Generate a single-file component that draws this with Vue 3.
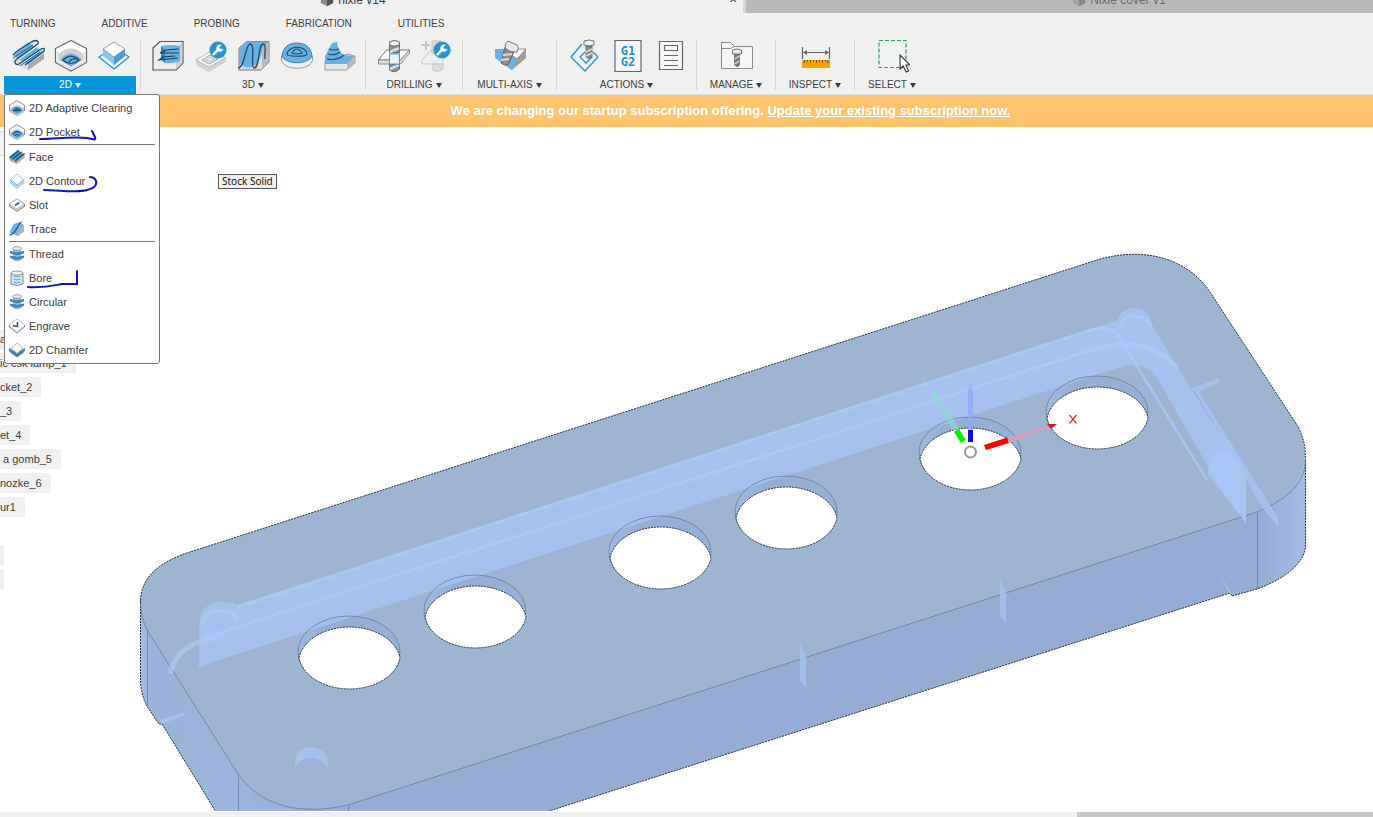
<template>
  <div class="app">
    <svg class="sprite" aria-hidden="true">
      <defs>
        <symbol id="wrench" viewBox="0 0 18 18">
          <circle cx="9" cy="9" r="8.5" fill="#2593d2" />
          <path d="M4.6 13.2 9 8.9" stroke="#fff" stroke-width="2.6" stroke-linecap="round" />
          <path d="M12.6 3.9a3.6 3.6 0 1 0 1.9 3.8l-2 .9-1.8-1.3.3-1.8z" fill="#fff" />
        </symbol>
        <symbol id="cube" viewBox="0 0 16 16">
          <path d="M8 1 15 4.500v7L8 15 1 11.500v-7z" fill="#8c8c8c" />
          <path d="M8 1 15 4.500 8 8 1 4.500z" fill="#c9c9c9" />
          <path d="M8 8v7l7-3.500v-7z" fill="#555" />
        </symbol>
        <symbol id="face" viewBox="0 0 34 34">
          <path d="M1.500 17v6l15.500 8.500V26z" fill="#ddd" />
          <path d="M17 26v5.500L33 20v-6z" fill="#a9a9a9" />
          <path d="M1.500 16 18 4l15 9-16 13z" fill="#69b0e3" />
          <path d="m8 20 17-12M13 23l17-12" stroke="#e8f3fb" stroke-width="1.200" />
          <path d="M2 16C2 14 21 2 24 1.500c4 0 4 3 2 4L6 20c-4 3-1 7 2 5L30 10c4-2 4 1 2 3L14 26" fill="none" stroke="#1c4b6b" stroke-width="1.300" />
          <path d="M2 19 22 6M9 27l20-14" fill="none" stroke="#1c4b6b" stroke-width=".8" />
        </symbol>
        <symbol id="pocket" viewBox="0 0 34 34">
          <path d="M17 1.500 32.500 9.500v14L17 32 1.500 23.500v-14z" fill="#fff" stroke="#666" stroke-width="1.200" />
          <path d="M2.500 11v12L17 31l14.500-8V11L29 14v8l-12 7-12-7v-8z" fill="#e2e2e2" />
          <path d="M5 15q12-11 24 0v6l-12 7-12-7z" fill="#cfcfcf" />
          <path d="M6 21q11-13 22 0l-11 7z" fill="#69b0e3" />
          <path d="M9 21q8-8 16 0-8 7-16 0zM15 24q1-5 8-4" fill="none" stroke="#1c4b6b" stroke-width="1.200" />
        </symbol>
        <symbol id="contour" viewBox="0 0 34 34">
          <path d="M2 18 17 8l15 10-15 12z" fill="#fff" stroke="#258ed0" stroke-width="1.300" />
          <path d="M6 10v7l11 9 11-9v-7z" fill="#8cc6ee" />
          <path d="M17 18v8l11-9v-7z" fill="#3e9edc" />
          <path d="M17 3 28 10l-11 8L6 10z" fill="#fff" stroke="#888" stroke-width=".8" />
        </symbol>
        <symbol id="adaptive" viewBox="0 0 34 34">
          <path d="M2 9 9 2.500h23V24l-7 7H2z" fill="#ededed" stroke="#555" stroke-width="1.200" />
          <path d="M25 9 31.500 3v21L25 30z" fill="#cfcfcf" />
          <path d="M10 7q9-2 19 0v15q-8 3-15 2l-4-4z" fill="#69b0e3" />
          <path d="M10 7v13l4 4V11z" fill="#3b86b9" />
          <path d="M28 10 15 11 9 14l19 0M24 17 12 18l-4 3 19-2" fill="none" stroke="#173e59" stroke-width="1.200" />
        </symbol>
        <symbol id="pocket-edit" viewBox="0 0 34 34">
          <path d="M2 21 15 13l17 6v4L15 33 2 26z" fill="#d1d1d1" />
          <path d="M2 21 15 13l17 6-17 9z" fill="#f4f4f4" stroke="#aaa" stroke-width=".7" />
          <path d="m8 21 8-5 8 4-9 5z" fill="#ddd" stroke="#999" stroke-width=".8" />
          <path d="m12 21 4-2 4 1-4 2z" fill="#fff" stroke="#aaa" stroke-width=".6" />
          <use href="#wrench" x="15" y="2" width="18" height="18" />
        </symbol>
        <symbol id="parallel" viewBox="0 0 34 34">
          <path d="M2 9 10 2.500h22V23l-8 8H2z" fill="#ddd" stroke="#777" />
          <path d="M2 9 10 2.500h22l-6 6q-1 8-5 14-4 6-9 6-7 0-10-6z" fill="#69b0e3" />
          <path d="M25 10 31.500 3.500V23L25 30z" fill="#bbb" />
          <path d="M1 29C8 29 8 6 13 5c6 0 0 23 4 24 6 0 4-24 9-24 4 0 1 11 2 15" fill="none" stroke="#1c4b6b" stroke-width="1.300" />
        </symbol>
        <symbol id="dome" viewBox="0 0 34 34">
          <path d="M1.500 17v4c2 11 29 11 31 0v-4z" fill="#f0f0f0" stroke="#888" stroke-width=".8" />
          <path d="M2 17C3 8 9 4 17 4s14 4 15 13c-4 9-26 9-30 0z" fill="#69b0e3" stroke="#276b9c" stroke-width=".8" />
          <path d="M7 15c1-9 19-9 20 0 0 3-20 3-20 0zM12 14q5-8 10 0-5 2-10 0z" fill="none" stroke="#1c4b6b" stroke-width="1.200" />
        </symbol>
        <symbol id="steep" viewBox="0 0 34 34">
          <path d="M2 22v9h22l8-7v-7l-7-2z" fill="#e7e7e7" stroke="#888" stroke-width=".8" />
          <path d="M24 25v6l8-7v-7z" fill="#bbb" />
          <path d="m9 4 5-1q1 9 7 13l11 1-8 8H2v-8z" fill="#69b0e3" />
          <path d="M6 10q5 2 10 0M5 15q7 2 12-2M4 20q10 2 17-4" fill="none" stroke="#1c4b6b" stroke-width="1.200" />
        </symbol>
        <symbol id="drill" viewBox="0 0 34 34">
          <path d="m1.500 21 8-10h23l-9 10z" fill="#fff" stroke="#777" />
          <path d="M1.500 21v4h22l9-11v-3l-9 10z" fill="#ddd" stroke="#777" stroke-width=".8" />
          <path d="M12.500 3q5-3 10 0v11h-10zM12.500 25h10v5q-5 5-10 1z" fill="#8c8c8c" stroke="#555" stroke-width=".8" />
          <path d="M12.500 3q5-3 10 0v3q-5 2-10 0z" fill="#eee" stroke="#666" stroke-width=".8" />
          <path d="m13 13 9-4M13 30l9-4" stroke="#ddd" stroke-width="2.500" />
          <path d="M12.500 15h10v10h-10z" fill="#e8f2fa" stroke="#3c9bd8" />
        </symbol>
        <symbol id="drill-edit" viewBox="0 0 34 34">
          <path d="M6 2v9M1 6h9" stroke="#c5c5c5" stroke-width="2" />
          <path d="m2 21 9-10h21l-9 10v4H2z" fill="#eee" stroke="#ccc" />
          <path d="M13 25h10v5q-5 4-10 1zM12 2h9v13h-9z" fill="#ddd" stroke="#c5c5c5" />
          <use href="#wrench" x="13" y="2" width="18" height="18" />
        </symbol>
        <symbol id="multi" viewBox="0 0 34 34">
          <path d="M1 10h11l6 21L1 19z" fill="#69b0e3" />
          <path d="m16 20 6-9h10v8L18 31z" fill="#9b9b9b" />
          <path d="M22 10h10l-9 10-6-4z" fill="#fafafa" stroke="#777" stroke-width=".8" />
          <path d="m15 18 8 2-5 11-8-6z" fill="#69b0e3" />
          <path d="m11 8 9 5-6 13q-4 1-7-2z" fill="#8c8c8c" stroke="#555" stroke-width=".8" />
          <path d="m7 21 8-1M9 16l9-1" stroke="#ddd" stroke-width="2" />
          <path d="m14 2 9 4q3 3 0 7-7 1-12-4 0-5 3-7z" fill="#e9e9e9" stroke="#666" stroke-width=".9" />
        </symbol>
        <symbol id="simulate" viewBox="0 0 34 34">
          <path d="M14 5 3 18l14 14 13-14-5-5M17 13l-5 5 6 6 6-6" fill="none" stroke="#258ed0" stroke-width="1.300" />
          <path d="M18 7h6v11q-3 3-6 0z" fill="#888" stroke="#666" stroke-width=".8" />
          <path d="m18 13 6-3M18 17l6-3" stroke="#ddd" stroke-width="1.500" />
          <path d="M16 2q5-2 10 0v4q-5 2-10 0z" fill="#eee" stroke="#666" stroke-width=".9" />
        </symbol>
        <symbol id="post" viewBox="0 0 34 34">
          <path d="M4 1.500h26v31H4z" fill="#f4f7fa" stroke="#666" stroke-width="1.200" />
          <text x="17" y="16" class="gcode">G1</text>
          <text x="17" y="27" class="gcode">G2</text>
        </symbol>
        <symbol id="sheet" viewBox="0 0 34 34">
          <path d="M5.500 2.500h23v28h-23z" fill="#f7f7f7" stroke="#666" stroke-width="1.200" />
          <path d="M10.500 6.500h13v5h-13zM10 16.500h14M10 21.500h14M10 26.500h14" fill="none" stroke="#666" stroke-width="1.200" />
        </symbol>
        <symbol id="library" viewBox="0 0 34 34">
          <path d="M1.500 3.500h9l4 4h18v22h-31z" fill="#f6f6f6" stroke="#888" />
          <path d="M1.500 9.500h9l4-2" fill="none" stroke="#888" />
          <path d="M14.500 14h5v12q-2 3-5 0z" fill="#777" stroke="#666" stroke-width=".8" />
          <path d="m14.500 20 5-3M14.500 25l5-3" stroke="#ccc" stroke-width="1.500" />
          <path d="M12.500 11q4-2 9 0v4h-9z" fill="#e8e8e8" stroke="#666" stroke-width=".9" />
        </symbol>
        <symbol id="measure" viewBox="0 0 34 34">
          <path d="M3.500 8v12M30.500 8v12M4 13.500h26" stroke="#666" stroke-width="1.200" />
          <path d="m4 13.500 4-2.500v5zM30 13.500 26 11v5z" fill="#666" />
          <path d="M3 21h28v8H3z" fill="#f5a300" />
          <path d="M5.500 21v3M8.500 21v2M11.500 21v3M14.500 21v2M17.500 21v3M20.500 21v2M23.500 21v3M26.500 21v2M29 21v3" stroke="#805500" />
        </symbol>
        <symbol id="select" viewBox="0 0 34 34">
          <path d="M3 1.500h27v27H3z" fill="#eff4f0" stroke="#2ba05c" stroke-width="1.200" stroke-dasharray="4 2" />
          <path d="m24 16 .2 14 3-3 3 6 2.300-1-2.500-6H34z" fill="#fff" stroke="#333" stroke-width="1.100" />
        </symbol>

        <symbol id="m-adaptive" viewBox="0 0 16 16">
          <path d="M8 .7 15.500 5v6L8 15.400.5 11V5z" fill="#f5f5f5" stroke="#888" stroke-width=".9" />
          <path d="M1 8 8 5l7 3v3l-7 4-7-4z" fill="#c3cfd9" />
          <path d="M2 10.500q6-8 12 0L8 14z" fill="#4b9bd4" />
          <path d="M4.500 10.500q3.500-4 7 0zM8 8v2" fill="none" stroke="#1c4b6b" />
        </symbol>
        <symbol id="m-pocket" viewBox="0 0 16 16">
          <path d="M8 .7 15.500 5v6L8 15.400.5 11V5z" fill="#f5f5f5" stroke="#888" stroke-width=".9" />
          <path d="M1 8 8 5l7 3v3l-7 4-7-4z" fill="#c3cfd9" />
          <path d="M2 10.500q6-8 12 0L8 14z" fill="#4b9bd4" />
          <path d="M3.500 9.500q4.500-4 9 0M6 11.500q2-2 4 0" fill="none" stroke="#1c4b6b" />
        </symbol>
        <symbol id="m-face" viewBox="0 0 16 16">
          <path d="M.5 8v3.500L7.500 15l8-6V5.500z" fill="#adadad" />
          <path d="M.5 7.500 8.500 1l7 4.500-8 6.500z" fill="#4b9bd4" />
          <path d="M.5 9 10 1.500M3 10.500 12.500 3M6 12l9.500-7.500" fill="none" stroke="#1c4b6b" stroke-width="1.100" />
        </symbol>
        <symbol id="m-contour" viewBox="0 0 16 16">
          <path d="M.7 9 8 15.300 15.300 9M.7 7 8 13 15.300 7" fill="none" stroke="#4ba5de" />
          <path d="M8 1 14.500 6.500 8 12 1.500 6.500z" fill="#fff" stroke="#9ab4c6" stroke-width=".8" />
        </symbol>
        <symbol id="m-slot" viewBox="0 0 16 16">
          <path d="M8 2 15.500 7v2.500L8 14.500.5 9.500V7z" fill="#ccc" stroke="#777" stroke-width=".8" />
          <path d="M8 2 15.500 7 8 12 .5 7z" fill="#fff" stroke="#999" stroke-width=".6" />
          <path d="m6.500 8 3-2" stroke="#226a9c" stroke-width="2" stroke-linecap="round" />
        </symbol>
        <symbol id="m-trace" viewBox="0 0 16 16">
          <path d="M1 10 5 3l5-2 5 3v6l-6 5-8-3z" fill="#6fb3e2" />
          <path d="M9 10 15 4v6.500L9 15z" fill="#b4b4b4" />
          <path d="M.5 14Q5 13 8 7t5-6" fill="none" stroke="#1c4b6b" stroke-width="1.100" />
        </symbol>
        <symbol id="m-thread" viewBox="0 0 16 16">
          <path d="M4 2q4-2 8 0v12q-4 2.500-8 0z" fill="#8cc3ea" />
          <ellipse cx="8" cy="2.500" rx="4.500" ry="1.800" fill="#eee" stroke="#888" stroke-width=".8" />
          <path d="M1.500 5.500q6.500 3 13 0v1.500q-6.500 3.500-13 0zM1.500 10q6.500 3 13 0v1.500q-6.500 3.500-13 0z" fill="#4b9bd4" stroke="#2c6085" stroke-width=".8" />
        </symbol>
        <symbol id="m-bore" viewBox="0 0 16 16">
          <path d="M2 3v11q6 3 12 0V3z" fill="#d4e5f3" stroke="#777" stroke-width=".9" />
          <ellipse cx="8" cy="3" rx="6" ry="2" fill="#f4f4f4" stroke="#888" stroke-width=".9" />
          <path d="M4.500 6q3.500 1.500 7 0M4.500 9q3.500 1.500 7 0M4.500 12q3.500 1.500 7 0" fill="none" stroke="#5ea9dc" stroke-width="1.200" />
        </symbol>
        <symbol id="m-engrave" viewBox="0 0 16 16">
          <path d="M8 1 15.500 7v2L8 15 .5 9V7z" fill="#e2e2e2" stroke="#777" stroke-width=".9" />
          <path d="M8 1 15.500 7 8 13 .5 7z" fill="#fbfbfb" />
          <path d="M8.500 4v4.500L4 7.500" fill="none" stroke="#1f5f8a" stroke-width="1.500" />
        </symbol>
        <symbol id="m-chamfer" viewBox="0 0 16 16">
          <path d="M1.500 9v2L8 15.500l6.500-4.500V9z" fill="#999" />
          <path d="M.5 6.500 8 12l7.500-5.500V9L8 14 .5 9z" fill="#3794d4" stroke="#1c4b6b" stroke-width=".6" />
          <path d="M8 1 14 6l-6 5.500L2 6z" fill="#f7f7f7" stroke="#999" stroke-width=".7" />
        </symbol>
      </defs>
    </svg>

    <header class="documents">
      <div class="document active">
        <svg class="doc-icon"><use href="#cube" /></svg>
        <span>nixie v14</span>
        <button class="close" aria-label="Close">✕</button>
      </div>
      <div class="document">
        <svg class="doc-icon"><use href="#cube" /></svg>
        <span>Nixie cover v1</span>
      </div>
    </header>

    <nav class="workspaces">
      <button v-for="tab in workspaces" :key="tab">{{ tab }}</button>
    </nav>

    <div class="toolbar">
      <div v-for="group in groups" :key="group.name" class="group" :class="{ open: group.name === openGroup }">
        <div class="tools">
          <button v-for="icon in group.icons" :key="icon" class="tool" :aria-label="icon">
            <svg><use :href="'#' + icon" /></svg>
          </button>
        </div>
        <button class="group-name" @click="toggle(group.name)">
          {{ group.name }}<i class="caret"></i>
        </button>
        <div v-if="group.menu && group.name === openGroup" class="menu">
          <ul>
            <li v-for="item in group.menu" :key="item.label" :class="{ divided: item.divided }">
              <button><svg><use :href="'#' + item.icon" /></svg>{{ item.label }}</button>
            </li>
          </ul>
          <svg class="ink" viewBox="0 0 155 270" aria-hidden="true">
            <path d="M36 45c15 0 33-3 47-1 8 2 9 2 8-1l-3-6" />
            <path d="M40 96c15 0 34 3 43 0 9-2 11-7 8-11-2-2-3-2-5-2" />
            <path d="M24 193c17 1 28-2 34-3h15v-13" />
          </svg>
        </div>
      </div>
    </div>

    <p class="banner">
      We are changing our startup subscription offering. <a href="#">Update your existing subscription now.</a>
    </p>

    <main class="viewport">
      <svg class="scene" viewBox="0 127 1373 684" preserveAspectRatio="xMidYMid meet">
        <defs>
          <linearGradient id="side" x1="140" x2="1306" y1="0" y2="0" gradientUnits="userSpaceOnUse">
            <stop offset="0" stop-color="#a3bee8" />
            <stop offset=".01" stop-color="#9ab3d8" />
            <stop offset=".08" stop-color="#9bb5dc" />
            <stop offset=".18" stop-color="#95add3" />
            <stop offset=".96" stop-color="#95add3" />
            <stop offset="1" stop-color="#a3bde8" />
          </linearGradient>
          <linearGradient id="wall" x1="0" x2="1" y1="0" y2="0">
            <stop offset="0" stop-color="#9fbae3" />
            <stop offset=".3" stop-color="#94add1" />
            <stop offset="1" stop-color="#97b0da" />
          </linearGradient>
        </defs>

        <!-- body -->
        <path class="edge" fill="url(#side)" d="M140.500 600V683Q142 698 148 708L159 724 162 724 216 812H546L1230 593 1232 596 1257 589C1290 577 1305.500 560 1305.500 545V460L700 400z" />
        <path fill="#9db5d3" d="M140.500 603C140 577 160 561 193 551L1100 259C1145 247 1187 258 1210 292L1297 425C1316 460 1301 492 1257 512L348 805C300 816 260 806 238 774L147 630Q141 618 140.500 603z" />
        <path class="edge" fill="none" d="M140.500 603C140 577 160 561 193 551L1100 259C1145 247 1187 258 1210 292L1297 425Q1306 440 1305.500 460" />
        <path class="seam" d="M140.500 603Q141 618 147 630L238 774C260 806 300 816 348 805L1257 512C1290 498 1305 482 1305.500 460M147.500 630V708M238.500 774V811M348.500 805V811M1257.500 512V589" />

        <!-- hole walls -->
        <ellipse v-for="h in holes" :key="h.x" :cx="h.x" :cy="h.y - 6" rx="51" ry="36" fill="url(#wall)" />

        <!-- pocket -->
        <g class="pocket">
          <path d="M199 627Q200 603 220 602 232 602 237 605L1118 320Q1121 308 1135 308 1150 309 1152 325L1178 368 1236 460 1246 478V523L1210 470 1157 378Q1146 363 1127 365L210 663 199 668z" />
          <path class="glow" d="M237 607 1085 332Q1110 322 1119 337L1207 480" />
          <path class="glow" d="M206 637 1085 352" />
          <path class="glow wide" d="M1085 352Q1130 337 1157 352 1169 358 1178 370" />
          <path class="glow wide" d="M225 635 206 640Q175 648 170 674" />
          <path class="glow" d="M202 625Q204 611 220 611 234 611 237 619M1119 328Q1122 316 1136 316 1149 318 1151 327M1209 475Q1212 464 1226 464 1240 465 1242 475" />
          <path d="M1208 475V470Q1211 454 1224 453 1240 454 1242 470L1246 478V523z" />
          <path d="M1190 389 1219 378V383L1199 392zM1195 391 1199 392 1278 518V527L1262 507z" />
          <path class="glow thin" d="M1074 342 1088 362 1122 352" />
          <path d="M295 768V762Q297 747 311 747 326 748 328 762V768Q322 758 311 758 300 758 295 768z" />
          <path d="M159 720 184 712V716L161 724zM800 644 806 657V688L800 680zM1000 580 1006 593V624L1000 615zM1220 575 1232 594 1229 593z" />
        </g>

        <g v-for="h in holes" :key="h.x">
          <ellipse class="seam" :cx="h.x" :cy="h.y - 6" rx="51" ry="36" />
          <path class="edge" fill="#fff" :d="`M${h.x - 50} ${h.y}A51 36 0 0 1 ${h.x + 51} ${h.y}A51 36 0 0 1 ${h.x - 50} ${h.y}z`" />
        </g>

        <!-- origin -->
        <path d="M1008 437.500 1050 425v3L1009 443z" fill="#dc9cb8" opacity=".75" />
        <path d="M984 445 1007 437.500 1009 443 986 450z" fill="#f00" />
        <path d="M1047 424h10l-6 5z" fill="#d8142c" />
        <path d="M954 432 931 396v-6l6 2 22 36z" fill="#8ed5d4" opacity=".7" />
        <path d="M954 432 959 429 966 440 961 443z" fill="#00f000" />
        <path d="M968 430V392l2.500-8 2.500 8V430z" fill="#8fa8fa" opacity=".75" />
        <path d="M968 430h5v12h-5z" fill="#0c0ce0" />
        <circle cx="970.500" cy="452" r="5.500" fill="#fff" stroke="#999" stroke-width="2" />
        <path d="M1069.500 415 1076.500 423.500M1076.500 415 1069.500 423.500" stroke="#e03030" stroke-width="1.200" />
        <path d="m921 375 3 4 3-4M924 379v5" fill="none" stroke="#8fd0c4" />
      </svg>

      <div class="panel-edge"></div>
      <ul class="browser">
        <li v-for="(node, i) in nodes" :key="i"><span v-if="node !== null">{{ node }}</span></li>
      </ul>
      <div class="tooltip">Stock Solid</div>
    </main>

    <footer class="scrollbar"><div class="thumb"></div></footer>
  </div>
</template>

<script setup>
import { ref } from 'vue'

const openGroup = ref('2D')

const workspaces = ['TURNING', 'ADDITIVE', 'PROBING', 'FABRICATION', 'UTILITIES']

const menu2d = [
  { label: '2D Adaptive Clearing', icon: 'm-adaptive' },
  { label: '2D Pocket', icon: 'm-pocket' },
  { label: 'Face', icon: 'm-face', divided: true },
  { label: '2D Contour', icon: 'm-contour' },
  { label: 'Slot', icon: 'm-slot' },
  { label: 'Trace', icon: 'm-trace' },
  { label: 'Thread', icon: 'm-thread', divided: true },
  { label: 'Bore', icon: 'm-bore' },
  { label: 'Circular', icon: 'm-thread' },
  { label: 'Engrave', icon: 'm-engrave' },
  { label: '2D Chamfer', icon: 'm-chamfer' }
]

const groups = [
  { name: '2D', icons: ['face', 'pocket', 'contour'], menu: menu2d },
  { name: '3D', icons: ['adaptive', 'pocket-edit', 'parallel', 'dome', 'steep'] },
  { name: 'DRILLING', icons: ['drill', 'drill-edit'] },
  { name: 'MULTI-AXIS', icons: ['multi'] },
  { name: 'ACTIONS', icons: ['simulate', 'post', 'sheet'] },
  { name: 'MANAGE', icons: ['library'] },
  { name: 'INSPECT', icons: ['measure'] },
  { name: 'SELECT', icons: ['select'] }
]

const nodes = ['a', 'ic csk lamp_1', 'cket_2', '_3', 'et_4', ' a gomb_5', 'nozke_6', 'ur1', null, '', '']

const holes = [
  { x: 349, y: 658 },
  { x: 475, y: 617 },
  { x: 660, y: 558 },
  { x: 786, y: 518 },
  { x: 970, y: 459 },
  { x: 1097, y: 418 }
]

function toggle(name) {
  openGroup.value = openGroup.value === name ? null : name
}
</script>

<style>
body {
  margin: 0;
}
</style>

<style scoped>
.app {
  display: flex;
  flex-direction: column;
  height: 100vh;
  overflow: hidden;
  background: #f0f0f0;
  color: #3c3c3c;
  font: 11px/14px "Liberation Sans", Arial, sans-serif;
}
.sprite {
  position: absolute;
  width: 0;
  height: 0;
}
button {
  padding: 0;
  border: 0;
  background: none;
  color: inherit;
  font: inherit;
}
ul {
  margin: 0;
  padding: 0;
  list-style: none;
}

.documents {
  display: flex;
  gap: 3px;
  height: 26px;
  margin-top: -13px;
  flex: none;
  background: #d8d8d8;
  font-size: 12px;
}
.document {
  flex: 1;
  display: flex;
  align-items: center;
  justify-content: center;
  gap: 3px;
  padding-left: 118px;
  background: #b9b9b9;
  color: #6a6a6a;
}
.document.active {
  flex: 0 0 54.1%;
  box-sizing: border-box;
  padding: 0 38px 0 0;
  background: #f0f0f0;
  color: #3c3c3c;
  position: relative;
}
.doc-icon {
  width: 16px;
  height: 14px;
}
.document:not(.active) .doc-icon {
  opacity: .5;
}
.close {
  position: absolute;
  right: 6px;
  font-size: 10px;
}

.workspaces {
  display: flex;
  flex: none;
  gap: 46px;
  height: 22px;
  padding-left: 10px;
  font-size: 10px;
}

.toolbar {
  display: grid;
  grid-template-columns: 141px 225px 97px 94px 140px 79px 79px 75px;
  flex: none;
  height: 59px;
  border-bottom: 1px solid #dedad2;
}
.group {
  position: relative;
  padding: 3px 5px 0 4px;
}
.group:not(:last-child)::after {
  content: "";
  position: absolute;
  top: 5px;
  right: 0;
  width: 1px;
  height: 50px;
  background: #d6d6d6;
}
.tools {
  display: flex;
  justify-content: center;
  margin-bottom: 2px;
  padding-left: 2px;
}
.tool {
  width: 43px;
  height: 36px;
}
.tool svg {
  display: block;
  width: 34px;
  height: 34px;
  margin: 0 auto;
}
.gcode {
  fill: #258ed0;
  font: bold 12px "DejaVu Sans Mono", monospace;
  text-anchor: middle;
}
.group-name {
  display: flex;
  align-items: center;
  justify-content: center;
  gap: 3px;
  width: 100%;
  height: 18px;
  font-size: 10px;
}
.open .group-name {
  background: #0696d7;
  color: #fff;
}
.caret {
  border: 3px solid transparent;
  border-top: 5px solid currentColor;
  border-bottom: 0;
}

.menu {
  position: absolute;
  z-index: 2;
  top: 59px;
  left: 4px;
  width: 154px;
  padding: 1px 0;
  border: 1px solid #777;
  border-radius: 3px;
  background: #fff;
}
.menu li {
  padding: 0 4px;
}
.menu li button {
  display: flex;
  align-items: center;
  gap: 4px;
  width: 100%;
  height: 24px;
}
.menu li.divided button {
  height: 25px;
  border-top: 1px solid #777;
}
.menu li svg {
  width: 16px;
  height: 16px;
}
.ink {
  position: absolute;
  top: -1px;
  left: -1px;
  width: 155px;
  height: 270px;
  fill: none;
  stroke: #1414b8;
  stroke-width: 2;
  stroke-linecap: round;
  pointer-events: none;
}

.banner {
  flex: none;
  height: 32px;
  margin: 0;
  padding-left: 88px;
  background: #fdc36d;
  color: #fff;
  font-size: 13px;
  font-weight: bold;
  line-height: 32px;
  text-align: center;
}
.banner a {
  color: inherit;
}

.viewport {
  position: relative;
  flex: 1;
  min-height: 0;
  background: #fff;
}
.scene {
  display: block;
  width: 100%;
  height: 100%;
}
.edge {
  stroke: #222b38;
  stroke-width: 1;
  stroke-dasharray: 2 1;
}
.seam {
  fill: none;
  stroke: #5f7594;
  stroke-width: .7;
}
.pocket {
  fill: #a7c7f6;
  fill-opacity: .75;
}
.glow {
  fill: none;
  stroke: #a9caf9;
  stroke-width: 3;
  stroke-opacity: .7;
}
.glow.wide {
  stroke-width: 5;
}
.glow.thin {
  stroke-width: 1;
}
.panel-edge {
  position: absolute;
  top: 4px;
  left: 0;
  width: 4px;
  height: 23px;
  border: 1px solid #dcdcdc;
  border-left: 0;
  background: #f5f5f5;
}
.browser {
  position: absolute;
  top: 200px;
  left: 0;
}
.browser li {
  height: 20px;
  padding: 2px 0;
}
.browser span {
  display: inline-block;
  height: 20px;
  min-width: 4px;
  box-sizing: border-box;
  background: #f0f0f0;
  line-height: 20px;
  white-space: pre;
}
.browser span:not(:empty) {
  padding-right: 9px;
}
.tooltip {
  position: absolute;
  top: 47px;
  left: 218px;
  padding: 0 3px;
  border: 1px solid #555;
  background: #f0f0f0;
  color: #111;
  font: 10px/13px "Noto Sans", sans-serif;
}

.scrollbar {
  display: flex;
  justify-content: flex-end;
  flex: none;
  height: 5px;
  border-top: 1px solid #fff;
}
.thumb {
  width: 296px;
  background: #c6c6c6;
}
</style>
